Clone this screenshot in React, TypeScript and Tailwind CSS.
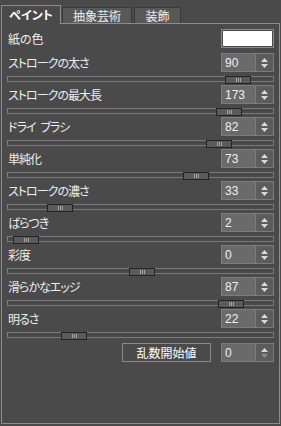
const font = "font-['Noto_Sans_CJK_JP','Noto_Sans',sans-serif]";

type Row = { label: string; value: number; thumb: number };

const rows: Row[] = [
  { label: "ストロークの太さ", value: 90, thumb: 224 },
  { label: "ストロークの最大長", value: 173, thumb: 215 },
  { label: "ドライ\u2002ブラシ", value: 82, thumb: 205 },
  { label: "単純化", value: 73, thumb: 182 },
  { label: "ストロークの濃さ", value: 33, thumb: 46 },
  { label: "ばらつき", value: 2, thumb: 12 },
  { label: "彩度", value: 0, thumb: 128 },
  { label: "滑らかなエッジ", value: 87, thumb: 217 },
  { label: "明るさ", value: 22, thumb: 60 },
];

function Arrows({ downDim }: { downDim?: boolean }) {
  return (
    <div className="flex w-[18px] flex-col items-center justify-center gap-[2px] border-l border-[#7c7c7c] bg-[#5c5c5c]">
      <svg width="7" height="4" viewBox="0 0 7 4">
        <path d="M3.5 0 L7 4 L0 4 Z" fill="#d8d8d8" />
      </svg>
      <svg width="7" height="4" viewBox="0 0 7 4">
        <path d="M0 0 L7 0 L3.5 4 Z" fill={downDim ? "#8a8a8a" : "#d8d8d8"} />
      </svg>
    </div>
  );
}

function Spinner({ value, downDim }: { value: number; downDim?: boolean }) {
  return (
    <div className="flex h-[19px] w-[53px] border border-[#7c7c7c] bg-[#6a6a6a]">
      <div className="flex flex-1 items-center pl-[3px] font-['Liberation_Sans',sans-serif] text-[12px] leading-none text-[#f0f0f0]">
        {value}
      </div>
      <Arrows downDim={downDim} />
    </div>
  );
}

function Slider({ left }: { left: number }) {
  return (
    <div className="relative h-[6px] border border-[#7a7a7a] bg-[#484848]">
      <div
        className="absolute top-[-1px] flex h-[8px] w-[26px] items-center justify-center gap-[1px] border border-[#222222] bg-[#5a5a5a]"
        style={{ left: left - 7 }}
      >
        <span className="h-[4px] w-px bg-[#a8a8a8]" />
        <span className="h-[4px] w-px bg-[#a8a8a8]" />
        <span className="h-[4px] w-px bg-[#a8a8a8]" />
      </div>
    </div>
  );
}

export default function App() {
  return (
    <div className={`flex h-[426px] w-[281px] flex-col bg-[#4a4a4a] pb-[2px] pl-[1px] pr-[1px] pt-[5px] ${font} [font-feature-settings:'palt'] text-[12px] text-[#eeeeee]`}>
      <div className="relative z-10 flex h-[18px] items-end">
        <div className="-mb-px flex h-[19px] w-[60px] items-center justify-center border-x border-t border-[#8c8c8c] bg-[#4a4a4a] font-bold text-white">
          ペイント
        </div>
        <div className="ml-px flex h-[16px] w-[70px] items-center justify-center border-x border-t border-[#3a3a3a] bg-[#585858] text-[#f0f0f0]">
          抽象芸術
        </div>
        <div className="ml-[2px] flex h-[16px] w-[47px] items-center justify-center border-x border-t border-[#3a3a3a] bg-[#585858] text-[#f0f0f0]">
          装飾
        </div>
      </div>
      <div className="flex flex-1 flex-col border border-[#8c8c8c] bg-[#4a4a4a] pl-[5px] pr-[5px] pt-[5px]">
        <div className="flex h-[19px] items-center justify-between">
          <span className="pl-[1px]">紙の色</span>
          <div className="h-[19px] w-[53px] border border-[#8a8a8a] bg-white shadow-[inset_0_0_0_1px_#4a4a4a]" />
        </div>
        <div className="mt-[5px] flex flex-col">
          {rows.map((r) => (
            <div key={r.label} className="flex h-[32px] flex-col">
              <div className="flex h-[19px] items-center justify-between">
                <span className="pl-[1px] tracking-[-1px] whitespace-pre">{r.label}</span>
                <Spinner value={r.value} />
              </div>
              <div className="mt-[4px]">
                <Slider left={r.thumb} />
              </div>
            </div>
          ))}
        </div>
        <div className="mt-[2px] flex h-[19px] justify-end gap-[10px]">
          <div className="flex w-[89px] items-center justify-center border border-[#8a8a8a] text-white">
            乱数開始値
          </div>
          <Spinner value={0} downDim />
        </div>
      </div>
    </div>
  );
}
